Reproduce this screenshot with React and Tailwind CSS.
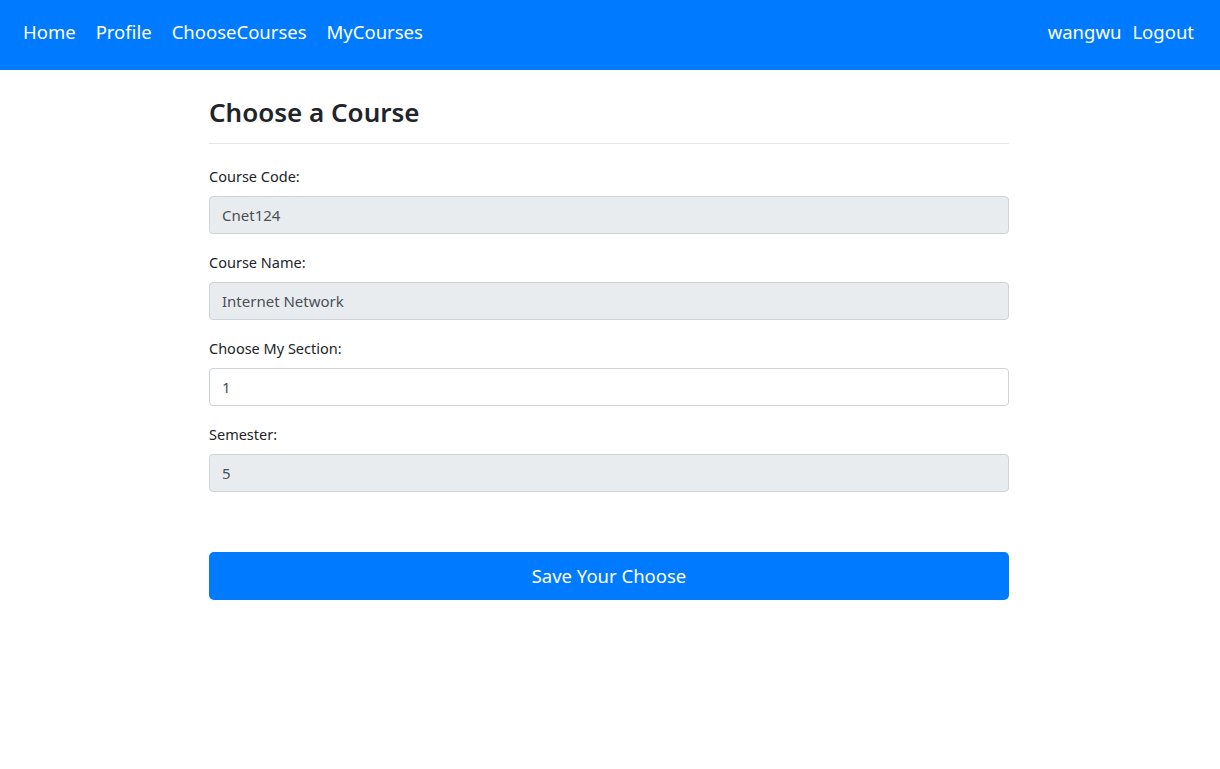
export default function App() {
    const font = { fontFamily: '"Noto Sans", "Open Sans", sans-serif' };
    return (
        <div className="min-h-screen bg-white text-[#212529]" style={font}>
            <nav className="h-[70px] bg-[#007bff] flex items-center justify-between pl-[23px] pr-[26px] pb-[7px] text-white text-[18.5px]">
                <div className="flex items-center gap-[20px]">
                    <a>Home</a>
                    <a>Profile</a>
                    <a>ChooseCourses</a>
                    <a>MyCourses</a>
                </div>
                <div className="flex items-center gap-[11px]">
                    <span>wangwu</span>
                    <a>Logout</a>
                </div>
            </nav>

            <div className="w-[800px] ml-[209px] pt-[24px]">
                <h3 className="text-[26px] font-semibold leading-[36px]">Choose a Course</h3>
                <div className="border-t border-[#e5e7eb] mt-[13px] mb-[22px]" />

                <form className="flex flex-col gap-[18px]">
                    <Field label="Course Code:" value="Cnet124" readOnly />
                    <Field label="Course Name:" value="Internet Network" readOnly />
                    <Field label="Choose My Section:" value="1" />
                    <Field label="Semester:" value="5" readOnly />
                </form>

                <button className="mt-[60px] w-full h-[48px] rounded-[5px] bg-[#007bff] text-white text-[18.5px]">
                    Save Your Choose
                </button>
            </div>
        </div>
    );
}

function Field({ label, value, readOnly }) {
    return (
        <div className="flex flex-col">
            <label className="text-[14.5px] leading-[20px] mb-[10px]">{label}</label>
            <input
                defaultValue={value}
                readOnly={readOnly}
                className={`h-[38px] px-[12px] text-[15px] text-[#495057] border border-[#ced4da] rounded-[4px] outline-none ${readOnly ? "bg-[#e9ecef]" : "bg-white"}`}
                style={{ fontFamily: '"Noto Sans", "Open Sans", sans-serif' }}
            />
        </div>
    );
}
